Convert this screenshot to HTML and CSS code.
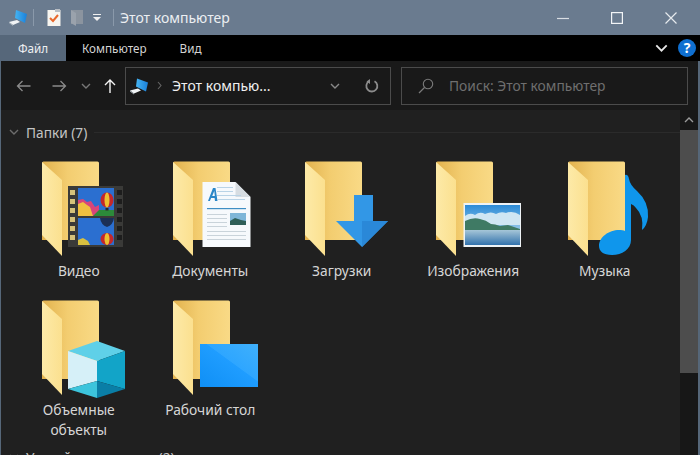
FILE: index.html
```html
<!DOCTYPE html>
<html lang="ru">
<head>
  <meta charset="UTF-8">
  <title>Этот компьютер</title>
  <link rel="stylesheet" href="styles.css">
</head>
<body>
  <svg class="defs" width="0" height="0">
    <defs>
      <linearGradient id="gBack" x1="0" x2="1" y1="0" y2="0">
        <stop offset="0" stop-color="#e2b24e"/>
        <stop offset="0.45" stop-color="#f3cd70"/>
        <stop offset="1" stop-color="#f9da86"/>
      </linearGradient>
      <linearGradient id="gFlap" x1="0" x2="1" y1="0" y2="0">
        <stop offset="0" stop-color="#fdeaa8"/>
        <stop offset="1" stop-color="#fbe08f"/>
      </linearGradient>
      <linearGradient id="gScreen" x1="0" x2="1" y1="1" y2="0">
        <stop offset="0" stop-color="#0f8ff5"/>
        <stop offset="0.55" stop-color="#1f9dff"/>
        <stop offset="0.56" stop-color="#2ea6ff"/>
        <stop offset="1" stop-color="#40b0fb"/>
      </linearGradient>
      <linearGradient id="gSky" x1="0" x2="0" y1="0" y2="1">
        <stop offset="0" stop-color="#2c8bd6"/>
        <stop offset="1" stop-color="#d4ecf7"/>
      </linearGradient>
      <linearGradient id="gWater" x1="0" x2="0" y1="0" y2="1">
        <stop offset="0" stop-color="#a6c6d8"/>
        <stop offset="1" stop-color="#3272ac"/>
      </linearGradient>
      <linearGradient id="gPc" x1="0" x2="1" y1="0" y2="0">
        <stop offset="0" stop-color="#45b4f2"/>
        <stop offset="1" stop-color="#1a80da"/>
      </linearGradient>
      <symbol id="folder" viewBox="0 0 96 100">
        <path d="M11 3q0-1.500 1.500-1.500h54q1.500 0 1.500 1.500v77h-57z" fill="url(#gBack)"/>
        <path d="M11 2l20 18v76l-20-21z" fill="url(#gFlap)"/>
      </symbol>
      <symbol id="pc" viewBox="0 0 18 17">
        <path d="M7 1l11 4-2 9-10-5z" fill="url(#gPc)"/>
        <path d="M0 13l8-2 3 2-7 3z" fill="#f1f4f6"/>
        <path d="M0 13l4 3v1l-4-3z" fill="#aeb8c0"/>
      </symbol>
      <symbol id="chev" viewBox="0 0 10 6">
        <path d="M1 1l4 4 4-4" fill="none" stroke="currentColor" stroke-width="1.400"/>
      </symbol>
    </defs>
  </svg>

  <div class="window">
    <header class="titlebar">
      <svg class="qa-pc"><use href="#pc"/></svg>
      <span class="qa-sep"></span>
      <svg class="qa-check" viewBox="0 0 14 17">
        <rect x="0.500" y="1" width="13" height="16" fill="#f7f5f0"/>
        <rect x="8" y="0" width="5" height="3" fill="#b9bec4"/>
        <path d="M3 9l3 3 5-6" fill="none" stroke="#e8682c" stroke-width="2"/>
      </svg>
      <svg class="qa-folder" viewBox="0 0 12 16">
        <rect width="12" height="14" fill="#8b949f"/>
        <path d="M0 0l5 3v13l-5-3z" fill="#9aa2ac"/>
      </svg>
      <svg class="qa-drop" viewBox="0 0 8 7">
        <rect x="0" y="0" width="8" height="1" fill="#f0f0f0"/>
        <path d="M0 3h8l-4 4z" fill="#f0f0f0"/>
      </svg>
      <span class="qa-sep qa-sep-2"></span>
      <span class="title">Этот компьютер</span>
      <div class="win-btns">
        <svg viewBox="0 0 12 12"><path d="M0 6.500h12" stroke="#d9dee3" stroke-width="1.200"/></svg>
        <svg viewBox="0 0 12 12"><rect x="0.600" y="0.600" width="10.800" height="10.800" fill="none" stroke="#f2f4f6" stroke-width="1.200"/></svg>
        <svg viewBox="0 0 12 12"><path d="M0.500 0.500l11 11M11.500 0.500l-11 11" stroke="#e6eaee" stroke-width="1.200"/></svg>
      </div>
    </header>

    <nav class="ribbon">
      <span class="tab tab-file">Файл</span>
      <span class="tab tab-pc">Компьютер</span>
      <span class="tab tab-view">Вид</span>
      <svg class="ribbon-chev"><use href="#chev"/></svg>
      <span class="help">?</span>
    </nav>

    <div class="navbar">
      <svg class="nav-arrow arrow-back" viewBox="0 0 14 12"><path d="M14 6H1M6 1L1 6l5 5" fill="none" stroke="currentColor" stroke-width="1.300"/></svg>
      <svg class="nav-arrow arrow-fwd" viewBox="0 0 14 12"><path d="M0 6h13M8 1l5 5-5 5" fill="none" stroke="currentColor" stroke-width="1.300"/></svg>
      <svg class="nav-recent"><use href="#chev"/></svg>
      <svg class="nav-up" viewBox="0 0 12 14"><path d="M6 14V1M1 6l5-5 5 5" fill="none" stroke="currentColor" stroke-width="1.400"/></svg>
      <div class="address">
        <svg class="addr-pc"><use href="#pc"/></svg>
        <svg class="addr-sep" viewBox="0 0 5 9"><path d="M1 1l3 3.500-3 3.500" fill="none" stroke="currentColor" stroke-width="1.100"/></svg>
        <span class="addr-text">Этот компью...</span>
        <svg class="addr-drop"><use href="#chev"/></svg>
        <svg class="addr-refresh" viewBox="0 0 14 14"><path d="M9.500 2.200A5.500 5.500 0 1 1 4 2.300" fill="none" stroke="currentColor" stroke-width="1.800"/><path d="M5 0v5L1.500 2.500z" fill="currentColor"/></svg>
      </div>
      <div class="search">
        <svg class="search-icon" viewBox="0 0 16 16"><circle cx="10" cy="6" r="4.700" fill="none" stroke="currentColor" stroke-width="1.100"/><path d="M6.500 9.500L1 15" stroke="currentColor" stroke-width="1.200"/></svg>
        <span>Поиск: Этот компьютер</span>
      </div>
    </div>

    <div class="content">
      <main class="main">
        <div class="group-head">
          <svg class="group-chev"><use href="#chev"/></svg>
          <span>Папки (7)</span>
          <span class="group-line"></span>
        </div>
        <div class="grid">
          <figure class="item">
            <svg class="icon" viewBox="0 0 96 100">
              <use href="#folder"/>
              <rect x="37" y="26" width="55" height="61" fill="#3a3a38"/>
              <g fill="#d6c27a">
                <rect x="39" y="30" width="5" height="5"/><rect x="39" y="39" width="5" height="5"/><rect x="39" y="48" width="5" height="5"/><rect x="39" y="57" width="5" height="5"/><rect x="39" y="66" width="5" height="5"/><rect x="39" y="75" width="5" height="5"/>
              </g>
              <g fill="#1d1d1d">
                <rect x="86" y="30" width="5" height="5"/><rect x="86" y="39" width="5" height="5"/><rect x="86" y="48" width="5" height="5"/><rect x="86" y="57" width="5" height="5"/><rect x="86" y="66" width="5" height="5"/><rect x="86" y="75" width="5" height="5"/>
              </g>
              <rect x="47" y="28" width="36" height="28" fill="#2b6fd0"/>
              <rect x="47" y="58" width="36" height="27" fill="#2b6fd0"/>
              <path d="M47 40l5-1 4 3 4-1 4 6 4-2v11h-21z" fill="#d8457a"/>
              <path d="M47 44l5-2 4 3 3 2 3 9h-15z" fill="#f0c040"/>
              <path d="M62 56l6-6h15v6z" fill="#2c8a3a"/>
              <ellipse cx="76" cy="40" rx="6.500" ry="7.500" fill="#c4282a"/>
              <ellipse cx="76" cy="40" rx="2.500" ry="7.500" fill="#eec030"/>
              <rect x="74.500" y="48" width="3" height="2.500" fill="#2a2a2a"/>
              <path d="M69 58h14q-1 7-7 9-6-2-7-9z" fill="#1c2f55"/>
              <ellipse cx="76" cy="79" rx="6.500" ry="6" fill="#c4282a"/>
              <ellipse cx="76" cy="79" rx="2.500" ry="6" fill="#eec030"/>
              <path d="M47 85v-5l5-2 5 3 2 4z" fill="#d8c040"/>
            </svg>
            <figcaption>Видео</figcaption>
          </figure>

          <figure class="item">
            <svg class="icon" viewBox="0 0 96 100">
              <use href="#folder"/>
              <path d="M40.500 22h33l15 15v50h-48z" fill="#f6f9fc"/>
              <path d="M73.500 22l15 15h-15z" fill="#d7dde2"/>
              <path d="M46 41l5-13h2.500l2 13h-2.500l-.4-3h-3.500l-1.200 3zm4.200-5h2.600l-.5-5z" fill="#2a86c8"/>
              <g fill="#b9d3e6">
                <rect x="55" y="27" width="16" height="1"/><rect x="55" y="31" width="16" height="1"/><rect x="55" y="35" width="24" height="1"/><rect x="55" y="39" width="28" height="1"/>
              </g>
              <rect x="45" y="48" width="39" height="1.200" fill="#3f8ec4"/>
              <g fill="#c9d3da">
                <rect x="45" y="54" width="20" height="1"/><rect x="45" y="58" width="20" height="1"/><rect x="45" y="62" width="20" height="1"/><rect x="45" y="66" width="20" height="1"/><rect x="45" y="71" width="39" height="1"/><rect x="45" y="75" width="39" height="1"/><rect x="45" y="79" width="39" height="1"/>
              </g>
              <rect x="68" y="53" width="16" height="12" fill="#7fb6d8"/>
              <path d="M68 61l5-3 6 2 5 1v4h-16z" fill="#2f5f58"/>
            </svg>
            <figcaption>Документы</figcaption>
          </figure>

          <figure class="item">
            <svg class="icon" viewBox="0 0 96 100">
              <use href="#folder"/>
              <path d="M60 35h19v26h15l-26 26-26-26h18z" fill="#3297e6"/>
              <path d="M68 87l26-26H68z" fill="#2a88d8"/>
            </svg>
            <figcaption>Загрузки</figcaption>
          </figure>

          <figure class="item">
            <svg class="icon" viewBox="0 0 96 100">
              <use href="#folder"/>
              <rect x="38.500" y="43" width="58" height="44" fill="#eef3f6"/>
              <rect x="40" y="45" width="55" height="40" fill="url(#gSky)"/>
              <path d="M40 56q5-4 10-1 5-4 10-1 6-3 11 0 5-3 10-1 7-3 14 2v10h-55z" fill="#cfe6f3"/>
              <path d="M40 61q8-4 15-2 6 1 11 5 4 0 9 2l8-1 12 4v2h-55z" fill="#3f7a64"/>
              <rect x="40" y="70" width="55" height="15" fill="url(#gWater)"/>
            </svg>
            <figcaption>Изображения</figcaption>
          </figure>

          <figure class="item">
            <svg class="icon" viewBox="0 0 96 100">
              <use href="#folder"/>
              <path d="M68 15q3-1 4 4 1 6 8 12 12 11 11 26-1 9-6 13 2-14-6-22-2-3-5-4v36c0 9-9 15-19 15-9 0-13-4-13-9 0-9 10-16 20-16 2 0 5 .4 6 1z" fill="#0f96ec"/>
            </svg>
            <figcaption>Музыка</figcaption>
          </figure>

          <figure class="item">
            <svg class="icon" viewBox="0 0 96 100">
              <use href="#folder"/>
              <path d="M66 42l28 10-28 10-29-10z" fill="#5fd0e8"/>
              <path d="M37 52l29 10v20l-29 8z" fill="#d6f0f8"/>
              <path d="M94 52l-28 10v20l28 8z" fill="#12a4c8"/>
              <path d="M37 90l29-8v17z" fill="#3cc4dc"/>
              <path d="M94 90l-28-8v17z" fill="#0a7ea6"/>
            </svg>
            <figcaption>Объемные<br>объекты</figcaption>
          </figure>

          <figure class="item">
            <svg class="icon" viewBox="0 0 96 100">
              <use href="#folder"/>
              <rect x="38" y="45" width="59" height="43" fill="url(#gScreen)"/>
            </svg>
            <figcaption>Рабочий стол</figcaption>
          </figure>
        </div>
        <div class="group-head group-drives">
          <svg class="group-chev"><use href="#chev"/></svg>
          <span>Устройства и диски (2)</span>
        </div>
      </main>
      <aside class="scrollbar">
        <div class="sb-up"><svg><use href="#chev"/></svg></div>
        <div class="sb-thumb"></div>
      </aside>
    </div>
  </div>
</body>
</html>
```

FILE: styles.css
```css
* {
  box-sizing: border-box;
}

html, body {
  margin: 0;
  height: 100%;
  overflow: hidden;
}

body {
  font-family: "Noto Sans", "Open Sans", Arial, sans-serif;
  background: #202020;
}

.defs {
  position: absolute;
}

.window {
  height: 455px;
  display: flex;
  flex-direction: column;
  border-left: 1px solid #566779;
  border-right: 2px solid #566779;
}

/* title bar */
.titlebar {
  height: 35px;
  flex: none;
  margin: 0 -2px 0 -1px;
  display: flex;
  align-items: center;
  background: #6a7b8f;
  padding-left: 9px;
}

.qa-pc {
  width: 18px;
  height: 17px;
}

.qa-sep {
  width: 1px;
  height: 17px;
  background: #8a99aa;
  margin-left: 6px;
}

.qa-check {
  width: 14px;
  height: 17px;
  margin-left: 13px;
}

.qa-folder {
  width: 12px;
  height: 16px;
  margin-left: 10px;
}

.qa-drop {
  width: 8px;
  height: 7px;
  margin-left: 10px;
}

.qa-sep-2 {
  margin-left: 12px;
}

.title {
  margin-left: 6px;
  font-size: 14px;
  color: #eceff2;
}

.win-btns {
  margin-left: auto;
  display: flex;
  gap: 42px;
  padding-right: 23px;
}

.win-btns svg {
  width: 12px;
  height: 12px;
}

/* ribbon */
.ribbon {
  height: 26px;
  flex: none;
  margin: 0 -2px 0 -1px;
  display: flex;
  align-items: center;
  background: #000;
  font-size: 11.7px;
  color: #d4d4d4;
}

.tab-file {
  width: 66px;
  height: 26px;
  line-height: 26px;
  text-align: center;
  background: #56677a;
  color: #eef0f2;
}

.tab-pc {
  margin-left: 16px;
}

.tab-view {
  margin-left: 33px;
}

.ribbon-chev {
  width: 13px;
  height: 8px;
  margin-left: auto;
  color: #e8e8e8;
}

.help {
  width: 18px;
  height: 18px;
  margin: 0 4px 0 10px;
  border-radius: 50%;
  background: #0f6fd0;
  color: #fff;
  font-size: 14px;
  font-weight: 700;
  line-height: 18px;
  text-align: center;
}

/* address row */
.navbar {
  height: 49px;
  flex: none;
  display: flex;
  align-items: center;
  padding: 0 10px 0 15px;
  background: #191919;
  color: #8a8a8a;
}

.nav-arrow {
  width: 15px;
  height: 12px;
}

.arrow-fwd {
  margin-left: 21px;
}

.nav-recent {
  width: 10px;
  height: 6px;
  margin-left: 14px;
  color: #777;
}

.nav-up {
  width: 12px;
  height: 14px;
  margin-left: 13px;
  color: #f4f4f4;
}

.address {
  width: 266px;
  height: 38px;
  margin-left: 9px;
  display: flex;
  align-items: center;
  padding-left: 4px;
  border: 1px solid #4b4b4b;
}

.addr-pc {
  width: 18px;
  height: 18px;
}

.addr-sep {
  width: 5px;
  height: 9px;
  margin-left: 9px;
  color: #666;
}

.addr-text {
  margin-left: 10px;
  font-size: 14px;
  color: #f0f0f0;
}

.addr-drop {
  width: 10px;
  height: 6px;
  margin-left: auto;
  color: #888;
}

.addr-refresh {
  width: 14px;
  height: 14px;
  margin: 0 11px 0 25px;
  color: #8c8c8c;
}

.search {
  flex: 1;
  height: 38px;
  margin-left: 10px;
  display: flex;
  align-items: center;
  gap: 15px;
  padding-left: 16px;
  border: 1px solid #4b4b4b;
  font-size: 13.8px;
  color: #6f6f6f;
}

.search-icon {
  width: 16px;
  height: 16px;
  flex: none;
  color: #7a7a7a;
}

/* files */
.content {
  flex: 1;
  min-height: 0;
  display: flex;
  background: #202020;
}

.main {
  flex: 1;
  min-width: 0;
  overflow: hidden;
}

.group-head {
  height: 44px;
  flex: none;
  display: flex;
  align-items: center;
  gap: 7px;
  padding: 0 0 0 8px;
  font-size: 13.7px;
  color: #c4c4c4;
}

.group-chev {
  width: 10px;
  height: 6px;
  color: #6c6c6c;
}

.group-line {
  flex: 1;
  height: 1px;
  background: #2b2b2b;
}

.grid {
  display: grid;
  grid-template-columns: repeat(5, 131.5px);
  grid-template-rows: 138.5px 148.5px;
  padding: 6px 0 0 12px;
}

.item {
  margin: 0;
  display: flex;
  flex-direction: column;
  align-items: center;
}

.icon {
  width: 96px;
  height: 100px;
  flex: none;
}

figcaption {
  font-size: 13.8px;
  line-height: 20px;
  margin-top: 1px;
  text-align: center;
  color: #d6d6d6;
}

.group-drives {
  height: 20px;
}

/* scrollbar */
.scrollbar {
  width: 18px;
  flex: none;
  background: #171717;
}

.sb-up {
  height: 20px;
  display: flex;
  align-items: center;
  justify-content: center;
  color: #9a9a9a;
}

.sb-up svg {
  width: 10px;
  height: 6px;
  transform: rotate(180deg);
}

.sb-thumb {
  height: 243px;
  background: #4d4d4d;
}
```
